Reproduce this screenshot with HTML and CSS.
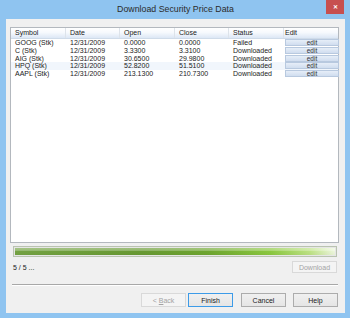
FILE: index.html
```html
<!doctype html>
<html lang="en">
    <head>
        <meta charset="UTF-8" />
        <title>Download Security Price Data</title>
        <link rel="stylesheet" href="styles.css">
    </head>
    <body>
        <div class="window">
            <div class="titlebar">
                <span></span>
                <span class="title">Download Security Price Data</span>
                <span class="close">&#x2715;</span>
            </div>

            <div class="client">
                <!-- price list -->
                <div class="list">
                    <div class="row head">
                        <span>Symbol</span>
                        <span>Date</span>
                        <span>Open</span>
                        <span>Close</span>
                        <span>Status</span>
                        <span>Edit</span>
                    </div>
                    <div class="row">
                        <span>GOOG (Stk)</span>
                        <span>12/31/2009</span>
                        <span>0.0000</span>
                        <span>0.0000</span>
                        <span>Failed</span>
                        <span><span class="edit">edit</span></span>
                    </div>
                    <div class="row">
                        <span>C (Stk)</span>
                        <span>12/31/2009</span>
                        <span>3.3300</span>
                        <span>3.3100</span>
                        <span>Downloaded</span>
                        <span><span class="edit">edit</span></span>
                    </div>
                    <div class="row">
                        <span>AIG (Stk)</span>
                        <span>12/31/2009</span>
                        <span>30.6500</span>
                        <span>29.9800</span>
                        <span>Downloaded</span>
                        <span><span class="edit">edit</span></span>
                    </div>
                    <div class="row hot">
                        <span>HPQ (Stk)</span>
                        <span>12/31/2009</span>
                        <span>52.8200</span>
                        <span>51.5100</span>
                        <span>Downloaded</span>
                        <span><span class="edit">edit</span></span>
                    </div>
                    <div class="row">
                        <span>AAPL (Stk)</span>
                        <span>12/31/2009</span>
                        <span>213.1300</span>
                        <span>210.7300</span>
                        <span>Downloaded</span>
                        <span><span class="edit">edit</span></span>
                    </div>
                </div>

                <div class="progress"><div class="fill"></div></div>

                <div class="status">
                    <span>5 / 5 ...</span>
                    <button class="btn" disabled>Download</button>
                </div>

                <div class="sep"></div>

                <div class="buttons">
                    <button class="btn back" disabled>&lt; <u>B</u>ack</button>
                    <button class="btn default">Finish</button>
                    <button class="btn cancel">Cancel</button>
                    <button class="btn">Help</button>
                </div>
            </div>
        </div>
    </body>
</html>
```

FILE: styles.css
```css
body {
    margin: 0;
    font-family: "Liberation Sans", Arial, sans-serif;
    background: #8fc4f0;
}

.window {
    width: 350px;
    height: 318px;
    box-sizing: border-box;
    padding: 0 5px 5px 6px;
    display: flex;
    flex-direction: column;
    background: #8fc4f0;
}

.titlebar {
    height: 19px;
    display: grid;
    grid-template-columns: 1fr auto 1fr;
    align-items: start;
}

.title {
    font-size: 8.8px;
    color: #2b2b2b;
    line-height: 19px;
}

.close {
    justify-self: end;
    width: 18px;
    height: 14px;
    margin-right: 1px;
    background: #c75050;
    color: #fff;
    font-size: 6px;
    font-weight: bold;
    line-height: 14px;
    text-align: center;
}

.client {
    flex: 1;
    background: #f0f0f0;
    padding: 8px 6px 0 4px;
    display: flex;
    flex-direction: column;
    font-size: 7px;
    color: #1a1a1a;
}

.list {
    height: 216px;
    box-sizing: border-box;
    background: #fff;
    border: 1px solid #b3b8be;
}

.row {
    display: grid;
    grid-template-columns: 55px 54px 55px 54px 55px 1fr;
    height: 7.8px;
    line-height: 7.8px;
}

.row span {
    padding-left: 4px;
    white-space: nowrap;
}

.row.hot {
    background: #f1f6fc;
}

.head {
    height: 10px;
    line-height: 10px;
    background: linear-gradient(#ffffff, #f6f9fd 45%, #dce7f5);
    border-bottom: 1px solid #cfdbe9;
}

.head span {
    border-right: 1px solid #dde3ea;
}

.head span:last-child {
    border-right: none;
}

.row > span:last-child {
    padding: 0 0 0 1px;
}

.row .edit {
    display: flex;
    align-items: center;
    justify-content: center;
    box-sizing: border-box;
    width: 54px;
    height: 7px;
    padding: 0;
    border: 1px solid #b8c9df;
    background: linear-gradient(#e6eef8, #d0ddef);
    font-size: 6.5px;
    line-height: 5px;
    color: #333;
}

.progress {
    height: 11px;
    box-sizing: border-box;
    margin: 3px 2px 0 3px;
    border: 1px solid #b9c3b0;
    background: #e6e6e6;
    padding: 1px;
}

.fill {
    height: 100%;
    background:
        linear-gradient(rgba(255, 255, 255, 0.35), rgba(255, 255, 255, 0.3) 35%, rgba(255, 255, 255, 0) 40%, rgba(0, 0, 0, 0.03)),
        linear-gradient(to right, #74a343, #689a33 40%, #6ea62f 60%, #8cc940 80%, #bde283 92%, #eef7de);
}

.status {
    display: flex;
    justify-content: space-between;
    align-items: center;
    margin: 4px 2px 0 3px;
}

.btn {
    width: 45px;
    height: 14px;
    padding: 0;
    border: 1px solid #acacac;
    background: linear-gradient(#f0f0f0, #e5e5e5);
    font-family: inherit;
    font-size: 7px;
    color: #1a1a1a;
}

.status .btn {
    height: 12px;
}

.btn:disabled {
    border-color: #d9d9d9;
    background: #f4f4f4;
    color: #a3a3a3;
}

.btn.default {
    border-color: #3c9be8;
}

.sep {
    height: 1px;
    margin: 11px 1px 0 2px;
    background: #a8a8a8;
    border-bottom: 1px solid #fff;
}

.buttons {
    display: flex;
    justify-content: flex-end;
    gap: 2px;
    margin-top: 7px;
    margin-right: 1px;
}

.buttons .cancel {
    margin: 0 5px 0 6px;
}
```
